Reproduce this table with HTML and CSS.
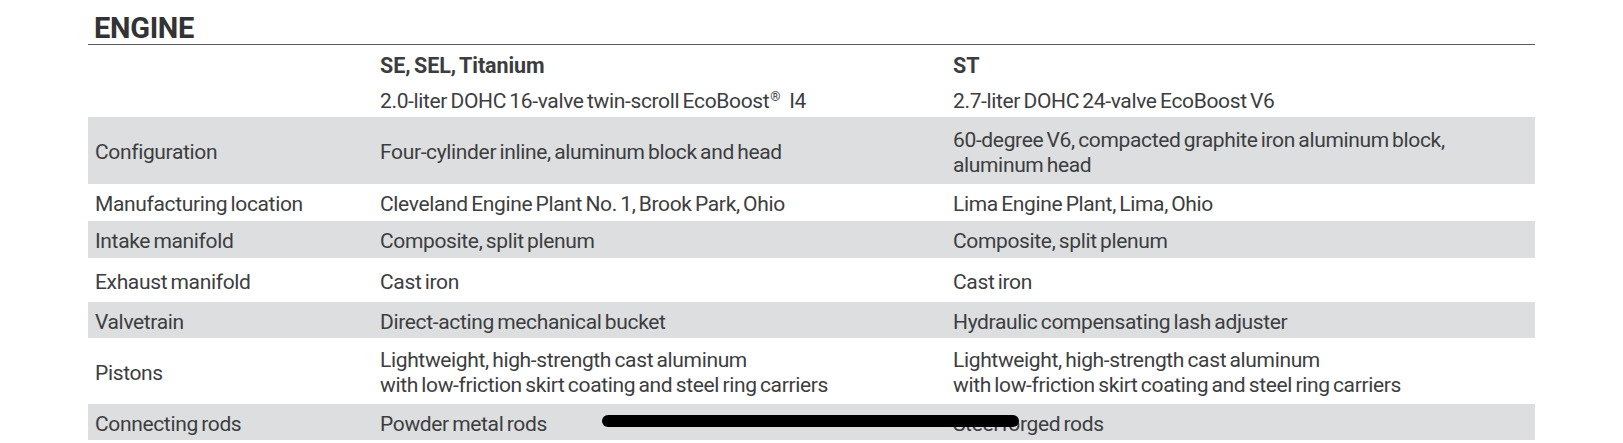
FILE: index.html
```html
<!DOCTYPE html>
<html lang="en">
<head>
<meta charset="utf-8">
<title>Engine specifications</title>
<link rel="stylesheet" href="styles.css">
</head>
<body>
<section class="spec">
  <h2 class="spec-title">ENGINE</h2>
  <div class="spec-table">
    <div class="cell"></div>
    <div class="cell head">SE, SEL, Titanium</div>
    <div class="cell head">ST</div>

    <div class="cell"></div>
    <div class="cell"><span>2.0-liter DOHC 16-valve twin-scroll EcoBoost<sup class="reg">®</sup>I4</span></div>
    <div class="cell">2.7-liter DOHC 24-valve EcoBoost V6</div>

    <div class="cell shade">Configuration</div>
    <div class="cell shade">Four-cylinder inline, aluminum block and head</div>
    <div class="cell shade">60-degree V6, compacted graphite iron aluminum block,<br>aluminum head</div>

    <div class="cell">Manufacturing location</div>
    <div class="cell">Cleveland Engine Plant No. 1, Brook Park, Ohio</div>
    <div class="cell">Lima Engine Plant, Lima, Ohio</div>

    <div class="cell shade">Intake manifold</div>
    <div class="cell shade">Composite, split plenum</div>
    <div class="cell shade">Composite, split plenum</div>

    <div class="cell">Exhaust manifold</div>
    <div class="cell">Cast iron</div>
    <div class="cell">Cast iron</div>

    <div class="cell shade">Valvetrain</div>
    <div class="cell shade">Direct-acting mechanical bucket</div>
    <div class="cell shade">Hydraulic compensating lash adjuster</div>

    <div class="cell">Pistons</div>
    <div class="cell">Lightweight, high-strength cast aluminum<br>with low-friction skirt coating and steel ring carriers</div>
    <div class="cell">Lightweight, high-strength cast aluminum<br>with low-friction skirt coating and steel ring carriers</div>

    <div class="cell shade">Connecting rods</div>
    <div class="cell shade">Powder metal rods</div>
    <div class="cell shade">Steel forged rods</div>
  </div>
  <div class="scribble"></div>
</section>
</body>
</html>
```

FILE: styles.css
```css
html, body {
  margin: 0;
  padding: 0;
  background: #ffffff;
}

body {
  font-family: Roboto, "Liberation Sans", sans-serif;
  color: #3d3d3f;
}

.spec {
  position: relative;
  width: 1447px;
  margin-left: 88px;
}

.spec-title {
  margin: 0;
  height: 45px;
  box-sizing: border-box;
  padding: 13px 0 0 6px;
  font-size: 29px;
  line-height: 30px;
  font-weight: 700;
  color: #333335;
  letter-spacing: -0.3px;
  border-bottom: 1.5px solid #5a5a5c;
}

.spec-table {
  display: grid;
  grid-template-columns: 285px 573px 1fr;
  grid-template-rows: 37px 35px 67px 37px 37px 44px 36px 66px 36px;
  font-size: 21px;
  line-height: 25px;
  letter-spacing: -0.35px;
  word-spacing: -1.5px;
}

.cell {
  display: flex;
  align-items: center;
  padding: 4px 0 0 7px;
  white-space: nowrap;
}

.cell.head {
  font-weight: 700;
  font-size: 21.5px;
  letter-spacing: -0.1px;
}

.cell.shade {
  background: #dcdedf;
}

.reg {
  font-size: 13px;
  line-height: 0;
  vertical-align: 7px;
  margin: 0 9px 0 1px;
}

.scribble {
  position: absolute;
  left: 514px;
  top: 415px;
  width: 417px;
  height: 12px;
  border-radius: 6px;
  background: #000000;
}
```
